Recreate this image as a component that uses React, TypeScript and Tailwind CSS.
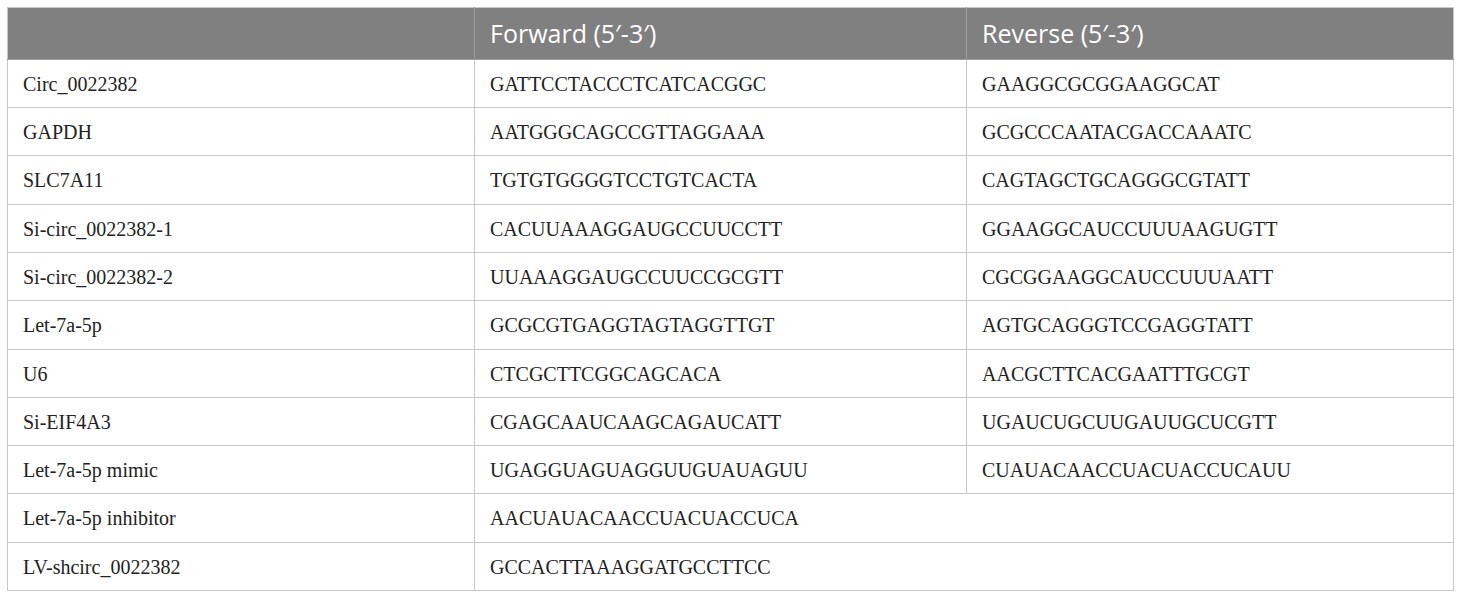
const rows: [string, string, string | null, boolean][] = [
  ["Circ_0022382", "GATTCCTACCCTCATCACGGC", "GAAGGCGCGGAAGGCAT", false],
  ["GAPDH", "AATGGGCAGCCGTTAGGAAA", "GCGCCCAATACGACCAAATC", false],
  ["SLC7A11", "TGTGTGGGGTCCTGTCACTA", "CAGTAGCTGCAGGGCGTATT", true],
  ["Si-circ_0022382-1", "CACUUAAAGGAUGCCUUCCTT", "GGAAGGCAUCCUUUAAGUGTT", false],
  ["Si-circ_0022382-2", "UUAAAGGAUGCCUUCCGCGTT", "CGCGGAAGGCAUCCUUUAATT", false],
  ["Let-7a-5p", "GCGCGTGAGGTAGTAGGTTGT", "AGTGCAGGGTCCGAGGTATT", true],
  ["U6", "CTCGCTTCGGCAGCACA", "AACGCTTCACGAATTTGCGT", false],
  ["Si-EIF4A3", "CGAGCAAUCAAGCAGAUCATT", "UGAUCUGCUUGAUUGCUCGTT", false],
  ["Let-7a-5p mimic", "UGAGGUAGUAGGUUGUAUAGUU", "CUAUACAACCUACUACCUCAUU", false],
  ["Let-7a-5p inhibitor", "AACUAUACAACCUACUACCUCA", null, true],
  ["LV-shcirc_0022382", "GCCACTTAAAGGATGCCTTCC", null, false],
];

const cell = "border border-[#c8c8c8] px-[15px] align-middle";

export default function App() {
  return (
    <div className="bg-white w-[1460px] h-[598px] pt-[7px] pl-[7px]">
      <table className="table-fixed border-collapse w-[1446px] font-['Liberation_Serif',serif] text-[20px] text-[#222]">
        <colgroup>
          <col className="w-[467px]" />
          <col className="w-[492px]" />
          <col className="w-[487px]" />
        </colgroup>
        <thead>
          <tr className="h-[52px] bg-[#808080] text-white font-['Open_Sans',sans-serif] text-[25px] text-left">
            <th className="border border-[#9c9c9c] border-t-[#c8c8c8] border-l-[#c8c8c8] px-[15px] font-normal"></th>
            <th className="border border-[#9c9c9c] border-t-[#c8c8c8] px-[15px] font-normal">Forward (5′-3′)</th>
            <th className="border border-[#9c9c9c] border-t-[#c8c8c8] border-r-[#c8c8c8] px-[15px] font-normal">Reverse (5′-3′)</th>
          </tr>
        </thead>
        <tbody>
          {rows.map(([name, fwd, rev, tall]) => (
            <tr key={name} className={tall ? "h-[49px]" : "h-[48px]"}>
              <td className={cell}>{name}</td>
              {rev === null ? (
                <td className={cell} colSpan={2}>{fwd}</td>
              ) : (
                <>
                  <td className={cell}>{fwd}</td>
                  <td className={cell}>{rev}</td>
                </>
              )}
            </tr>
          ))}
        </tbody>
      </table>
    </div>
  );
}
